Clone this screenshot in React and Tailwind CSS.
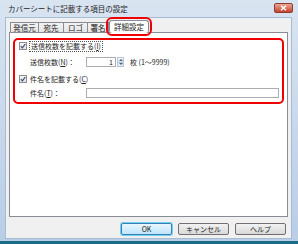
import React from "react";

const FONT = { fontFamily: '"Noto Sans CJK JP", "Noto Sans", sans-serif' };

const TABS = [
  { label: "発信元", w: "w-[29px]" },
  { label: "宛先", w: "w-[26px]" },
  { label: "ロゴ", w: "w-[25px]" },
  { label: "署名", w: "w-[22px]" },
];

const Check = () => (
  <span className="flex h-[8px] w-[8px] items-center justify-center border border-[#8f8f8f] bg-gradient-to-b from-[#f4f4f4] to-[#e2e2e2]">
    <svg width="6" height="6" viewBox="0 0 6 6">
      <path d="M0.8 3.2 L2.4 4.8 L5.3 1" fill="none" stroke="#3a4e7a" strokeWidth="1.2" />
    </svg>
  </span>
);

const Btn = ({ children, def }) => (
  <div
    className={
      "flex h-[12px] w-[51px] items-center justify-center rounded-[2px] border text-[7px] leading-none text-[#222] bg-gradient-to-b " +
      (def
        ? "border-[#3c7fb1] from-[#eaf6fd] to-[#bee6fd] shadow-[0_0_0_1px_#6fd0f6]"
        : "border-[#707070] from-[#f2f2f2] to-[#d9d9d9]")
    }
  >
    {children}
  </div>
);

export default function App() {
  return (
    <div
      className="flex h-[244px] w-[298px] flex-col bg-gradient-to-b from-[#d9e4f1] to-[#b9cde5] border-b-[3px] border-[#1d6a86]"
      style={FONT}
    >
      {/* title bar */}
      <div className="flex h-[17px] shrink-0 items-center justify-between pl-[8px] pr-[5px]">
        <span className="text-[7.5px] leading-none text-[#1e1e1e]">カバーシートに記載する項目の設定</span>
        <div className="mb-[2px] flex h-[10px] w-[19px] items-center justify-center rounded-[2px] border border-[#8e3b33] bg-gradient-to-b from-[#eba594] to-[#c4412c]">
          <svg width="7" height="6" viewBox="0 0 7 6">
            <path d="M1 0.8 L6 5.2 M6 0.8 L1 5.2" stroke="#fff" strokeWidth="1.4" />
          </svg>
        </div>
      </div>

      {/* client area */}
      <div className="mb-[2px] ml-[5px] mr-[6px] flex flex-1 flex-col border border-[#a5bcd6] bg-[#f0f0f0]">
        {/* tabs */}
        <div className="flex h-[14px] items-end pl-[4px]">
          {TABS.map((t) => (
            <div
              key={t.label}
              className={`${t.w} -mr-px flex h-[10px] items-center justify-center border border-b-0 border-[#898c95] bg-gradient-to-b from-[#f3f3f3] to-[#e6e6e6] text-[7.5px] leading-none text-[#222]`}
            >
              {t.label}
            </div>
          ))}
          <div className="relative z-10 -mb-px ml-[1px] flex h-[13px] w-[40px] items-center justify-center border border-b-0 border-[#898c95] bg-white text-[7.5px] leading-none text-[#222] outline-2 outline-offset-1 outline-[#f00000] rounded-[3px]">
            詳細設定
          </div>
        </div>

        {/* panel */}
        <div className="mx-[3px] h-[185px] border border-[#898c95] bg-white px-[3px] pt-[5px]">
          <div className="flex h-[66px] flex-col rounded-[5px] border-2 border-[#f00000] text-[7px] leading-none text-[#222]">
            <div className="ml-[4px] mt-[1px] flex h-[10px] items-center gap-[2px]">
              <Check />
              <span className="border border-dotted border-[#555] px-px py-[1px]">
                送信枚数を記載する(<u>I</u>)
              </span>
            </div>
            <div className="ml-[15px] mt-[6px] flex h-[10px] items-center">
              <span className="w-[56px]">
                送信枚数(<u>N</u>)：
              </span>
              <div className="flex h-[10px] w-[30px] items-center justify-end border border-[#abadb3] bg-white pr-[2px]">
                1
              </div>
              <div className="ml-px flex h-[10px] w-[7px] flex-col">
                <div className="flex flex-1 items-center justify-center border border-[#b8c6d6] bg-gradient-to-b from-[#f6f9fc] to-[#dde7f1]">
                  <svg width="4" height="2" viewBox="0 0 4 2">
                    <path d="M0 2 L2 0 L4 2 Z" fill="#4d6185" />
                  </svg>
                </div>
                <div className="flex flex-1 items-center justify-center border border-t-0 border-[#b8c6d6] bg-gradient-to-b from-[#f6f9fc] to-[#dde7f1]">
                  <svg width="4" height="2" viewBox="0 0 4 2">
                    <path d="M0 0 L2 2 L4 0 Z" fill="#4d6185" />
                  </svg>
                </div>
              </div>
              <span className="ml-[6px]">枚 (1～9999)</span>
            </div>
            <div className="ml-[4px] mt-[7px] flex h-[10px] items-center gap-[3px]">
              <Check />
              <span>
                件名を記載する(<u>C</u>)
              </span>
            </div>
            <div className="ml-[15px] mt-[4px] flex h-[10px] items-center">
              <span className="w-[56px]">
                件名(<u>T</u>)：
              </span>
              <div className="h-[10px] w-[193px] border border-[#abadb3] bg-white" />
            </div>
          </div>
        </div>

        {/* buttons */}
        <div className="mt-[6px] flex justify-end gap-[6px] pr-[5px]">
          <Btn def>OK</Btn>
          <Btn>キャンセル</Btn>
          <Btn>ヘルプ</Btn>
        </div>
      </div>
    </div>
  );
}
